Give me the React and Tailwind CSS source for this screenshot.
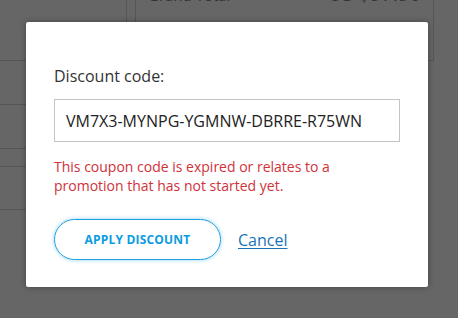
import React from 'react';

const rows = [61, 44, 44, 18, 43];

const App = () => {
  return (
    <div className="relative w-[458px] h-[318px] overflow-hidden bg-[#666666]" style={{ fontFamily: '"Open Sans", "Liberation Sans", sans-serif' }}>
      {/* Dimmed page behind the dialog */}
      <div className="flex h-full items-start">
        <div className="w-[126px] shrink-0 flex flex-col">
          {rows.map((h, i) => (
            <div key={i} className="border-b border-[#555]" style={{ height: h }}></div>
          ))}
        </div>
        <div className="w-[10px] shrink-0 border-x border-[#555] h-[30px]"></div>
        <div className="w-[298px] shrink-0 h-[61px] border-r border-b border-[#555] flex justify-between px-[12px] items-start text-[#333] overflow-hidden">
          <span className="text-[15px] leading-[24px] -mt-[17px]">Grand Total</span>
          <span className="text-[20px] leading-[24px] -mt-[18px]">US $97.90</span>
        </div>
      </div>

      {/* Dialog */}
      <div className="absolute left-[26px] top-[22px] w-[402px] h-[265px] bg-white rounded-[2px] shadow-[0_0_6px_rgba(0,0,0,0.35)] px-[28px] pt-[42px]">
        <label className="block text-[16px] leading-[24px] text-[#333]">Discount code:</label>
        <div className="mt-[11px] w-[346px] h-[43px] border border-[#c4c4c4] flex items-center pl-[11px] text-[16px] text-[#222]">
          VM7X3-MYNPG-YGMNW-DBRRE-R75WN
        </div>
        <p className="mt-[15px] text-[14px] leading-[19px] text-[#d0313a] w-[320px]">
          This coupon code is expired or relates to a promotion that has not started yet.
        </p>
        <div className="mt-[24px] flex items-center gap-[17px]">
          <button className="w-[167px] h-[41px] rounded-full border border-[#1a9fdc] shadow-[0_0_4px_rgba(26,159,220,0.45)] text-[12px] font-bold text-[#0a9be0] tracking-[0.2px]">
            APPLY DISCOUNT
          </button>
          <a href="#" className="text-[16px] text-[#1a73b8] underline underline-offset-2">Cancel</a>
        </div>
      </div>
    </div>
  );
};

export default App;
